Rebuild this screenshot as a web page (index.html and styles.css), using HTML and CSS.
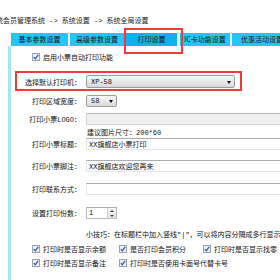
FILE: index.html
```html
<!DOCTYPE html>
<html lang="zh-CN">
<head>
<meta charset="UTF-8">
<title>打印设置</title>
<link rel="stylesheet" href="styles.css">
</head>
<body>

<div class="crumb">统会员管理系统 -&gt; 系统设置 -&gt; 系统全局设置</div>

<div class="tabs">
    <div class="tab t1">基本参数设置</div>
    <div class="tab t2">高级参数设置</div>
    <div class="tab t3 active">打印设置</div>
    <div class="tab t4">IC卡功能设置</div>
    <div class="tab t5">优惠活动设置</div>
</div>

<div class="panel">
    <div class="check-line first">
        <svg class="cb" viewBox="0 0 8 8"><rect x="0.5" y="0.5" width="7" height="7" fill="#eef1f5" stroke="#9aa3ad"/><path d="M1.8 4.2 L3.3 5.9 L6.2 1.9" fill="none" stroke="#2d4fb4" stroke-width="1.2"/></svg>
        <span>启用小票自动打印功能</span>
    </div>

    <div class="field printer">
        <label>选择默认打印机：</label>
        <div class="select wide"><span class="ascii">XP-58</span><i class="arrow"></i></div>
    </div>

    <div class="field w-row">
        <label>打印区域宽度：</label>
        <div class="select narrow"><span class="ascii">58</span><i class="arrow"></i></div>
    </div>

    <div class="field logo-row">
        <label>打印小票<span class="ascii">LOGO</span>：</label>
        <div class="input grey"></div>
    </div>

    <div class="hint">建议图片尺寸：<span class="ascii">200*60</span></div>

    <div class="field title-row">
        <label>打印小票标题：</label>
        <div class="input"><span class="ascii">XX</span>旗舰店小票打印</div>
    </div>

    <div class="field foot-row">
        <label>打印小票脚注：</label>
        <div class="input"><span class="ascii">XX</span>旗舰店欢迎您再来</div>
    </div>

    <div class="field contact-row">
        <label>打印联系方式：</label>
        <div class="input"></div>
    </div>

    <div class="field copies-row">
        <label>设置打印份数：</label>
        <div class="spin"><span class="ascii">1</span><div class="spin-btns"><i class="up"></i><i class="down"></i></div></div>
    </div>

    <div class="tip">小技巧：在标题栏中加入竖线<span class="ascii">"|"</span>，可以将内容分隔成多行显示</div>

    <div class="checks r1">
        <div class="check-line">
            <svg class="cb" viewBox="0 0 8 8"><rect x="0.5" y="0.5" width="7" height="7" fill="#eef1f5" stroke="#9aa3ad"/><path d="M1.8 4.2 L3.3 5.9 L6.2 1.9" fill="none" stroke="#2d4fb4" stroke-width="1.2"/></svg>
            <span>打印时是否显示余额</span>
        </div>
        <div class="check-line">
            <svg class="cb" viewBox="0 0 8 8"><rect x="0.5" y="0.5" width="7" height="7" fill="#eef1f5" stroke="#9aa3ad"/><path d="M1.8 4.2 L3.3 5.9 L6.2 1.9" fill="none" stroke="#2d4fb4" stroke-width="1.2"/></svg>
            <span>是否打印会员积分</span>
        </div>
        <div class="check-line">
            <svg class="cb" viewBox="0 0 8 8"><rect x="0.5" y="0.5" width="7" height="7" fill="#eef1f5" stroke="#9aa3ad"/><path d="M1.8 4.2 L3.3 5.9 L6.2 1.9" fill="none" stroke="#2d4fb4" stroke-width="1.2"/></svg>
            <span>打印时是否显示找零</span>
        </div>
    </div>
    <div class="checks r2">
        <div class="check-line">
            <svg class="cb" viewBox="0 0 8 8"><rect x="0.5" y="0.5" width="7" height="7" fill="#eef1f5" stroke="#9aa3ad"/><path d="M1.8 4.2 L3.3 5.9 L6.2 1.9" fill="none" stroke="#2d4fb4" stroke-width="1.2"/></svg>
            <span>打印时是否显示备注</span>
        </div>
        <div class="check-line">
            <svg class="cb" viewBox="0 0 8 8"><rect x="0.5" y="0.5" width="7" height="7" fill="#eef1f5" stroke="#9aa3ad"/><path d="M1.8 4.2 L3.3 5.9 L6.2 1.9" fill="none" stroke="#2d4fb4" stroke-width="1.2"/></svg>
            <span>打印时是否使用卡面号代替卡号</span>
        </div>
    </div>
</div>

</body>
</html>
```

FILE: styles.css
```css
body {
    margin: 0;
    width: 280px;
    height: 280px;
    overflow: hidden;
    background: #ffffff;
    color: #111111;
    font-family: "Noto Sans CJK SC", "Noto Sans", sans-serif;
    font-size: 7px;
    line-height: 10px;
}
.ascii {
    font-family: "Liberation Mono", "Noto Sans CJK SC", monospace;
}
.crumb {
    padding-top: 16px;
    height: 11px;
    line-height: 11px;
    margin-left: -4px;
    white-space: nowrap;
    font-family: "Liberation Mono", "Noto Sans CJK SC", monospace;
    color: #222222;
}

/* tab strip */
.tabs {
    display: flex;
    margin: 6px 0 0 11px;
    height: 13px;
    white-space: nowrap;
}
.tab {
    background: #22c8f4;
    line-height: 13px;
    text-align: center;
    margin-right: 2px;
    flex-shrink: 0;
}
.t1 { width: 57px; }
.t2 { width: 54px; }
.t3 { width: 51px; margin-right: 3px; }
.t4 { width: 50px; }
.t5 { width: 60px; }
.tab.active {
    background: #0ab4ec;
    position: relative;
}
.tab.active::after {
    content: "";
    position: absolute;
    left: -2px;
    top: -5px;
    width: 55px;
    height: 22px;
    border: 2px solid #ee3b3b;
}

/* content panel */
.panel {
    margin-left: 8px;
    border-left: 3px solid #a6e5f8;
    height: 240px;
    display: flex;
    flex-direction: column;
}
.check-line {
    display: flex;
    align-items: center;
    white-space: nowrap;
    height: 10px;
}
.cb {
    width: 8px;
    height: 8px;
    margin-right: 3px;
    flex-shrink: 0;
}
.check-line.first {
    margin: 6px 0 0 21px;
}

.field {
    display: grid;
    grid-template-columns: 70px auto;
    column-gap: 5px;
    align-items: center;
    white-space: nowrap;
}
.field label {
    text-align: right;
}
.printer {
    margin-top: 13px;
    height: 13px;
    position: relative;
}
.printer::after {
    content: "";
    position: absolute;
    left: 4px;
    top: -4px;
    width: 223px;
    height: 16px;
    border: 2px solid #ee3b3b;
}
.w-row { margin-top: 7px; height: 12px; }
.logo-row { margin-top: 6px; height: 12px; }
.title-row { margin-top: 1px; height: 12px; }
.foot-row { margin-top: 10px; height: 12px; }
.contact-row { margin-top: 11px; height: 12px; }
.copies-row { margin-top: 12px; height: 12px; }

.select {
    height: 11px;
    border: 1px solid #9c9c9c;
    border-radius: 2px;
    background: linear-gradient(#f7f7f7, #dadada);
    display: flex;
    align-items: center;
    padding-left: 4px;
    box-sizing: content-box;
    position: relative;
}
.select.wide { width: 143px; }
.select.narrow { width: 25px; height: 10px; }
.arrow {
    position: absolute;
    right: 3px;
    top: 50%;
    margin-top: -1px;
    border-left: 2.5px solid transparent;
    border-right: 2.5px solid transparent;
    border-top: 3px solid #111111;
}

.input {
    width: 210px;
    height: 10px;
    border: 1px solid #e3e7ee;
    border-top-color: #abadb3;
    background: #ffffff;
    padding-left: 2px;
    line-height: 10px;
}
.input.grey {
    background: #efefef;
    border-color: #d6d6d6;
    border-top-color: #b9b9b9;
}

.hint {
    margin: 2px 0 0 76px;
    height: 10px;
    white-space: nowrap;
}

.spin {
    width: 27px;
    height: 10px;
    border: 1px solid #b7bcc4;
    border-top-color: #abadb3;
    background: #ffffff;
    padding-left: 2px;
    display: flex;
    align-items: center;
    justify-content: space-between;
}
.spin-btns {
    width: 8px;
    height: 10px;
    border-left: 1px solid #d0d4da;
    background: linear-gradient(#f4f4f4, #e2e2e2);
    display: flex;
    flex-direction: column;
    align-items: center;
    justify-content: space-around;
}
.spin-btns i {
    border-left: 2px solid transparent;
    border-right: 2px solid transparent;
}
.spin-btns .up { border-bottom: 2px solid #444444; }
.spin-btns .down { border-top: 2px solid #444444; }

.tip {
    margin: 10px 0 0 75px;
    height: 10px;
    white-space: nowrap;
}

.checks {
    display: grid;
    grid-template-columns: 87px 84px auto;
    margin-left: 21px;
}
.checks.r1 { margin-top: 5px; }
.checks.r2 { margin-top: 4px; }
```
